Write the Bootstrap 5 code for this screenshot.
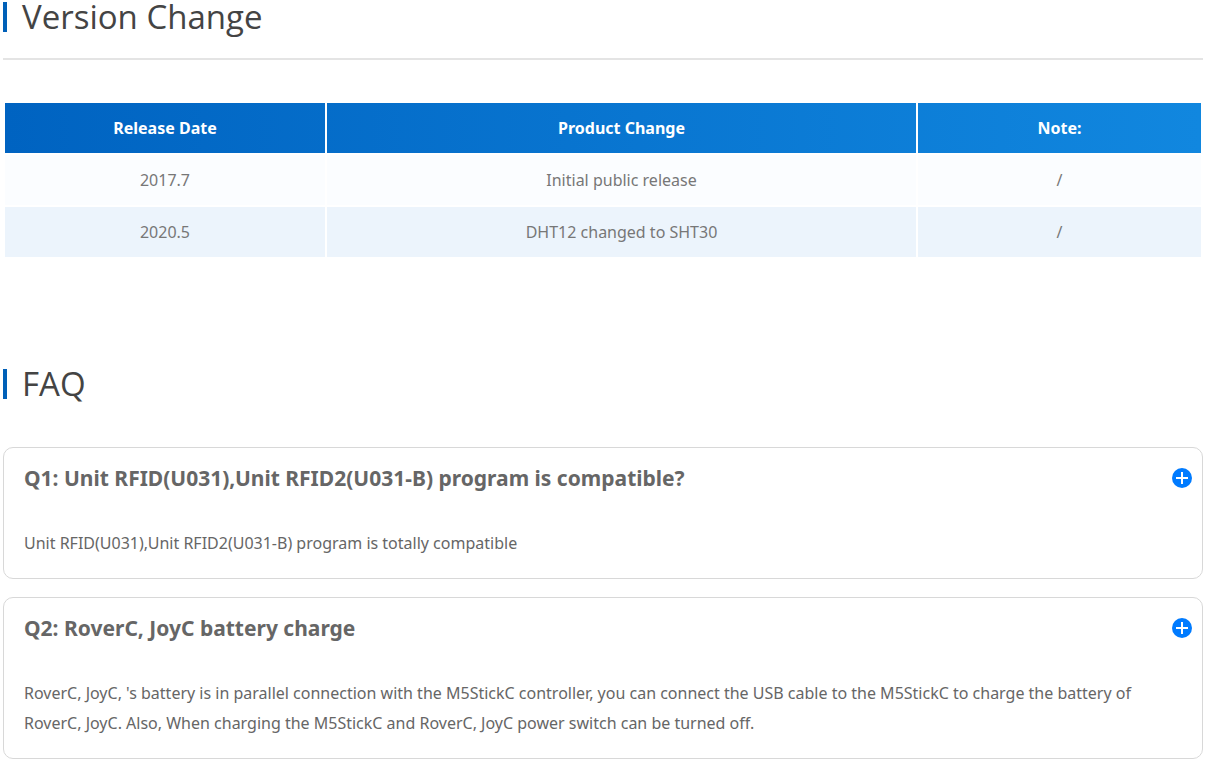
<!DOCTYPE html>
<html lang="en">
<head>
<meta charset="utf-8">
<meta name="viewport" content="width=device-width, initial-scale=1">
<title>Version Change and FAQ</title>
<link href="https://cdn.jsdelivr.net/npm/bootstrap@5.3.0/dist/css/bootstrap.min.css" rel="stylesheet">
<style>
body{font-family:"Noto Sans","Open Sans",sans-serif;color:#666;background:#fff;font-size:16px;line-height:30px}
.page-body{padding:2px 2px 2px 3px}
.section-title{font-family:"Open Sans","Noto Sans",sans-serif;font-size:33px;line-height:30px;font-weight:400;color:#444;border-left:4px solid #0060b8;padding-left:15px}
.title-rule{margin:26px 0 0;border-top:2px solid #e4e4e4;opacity:1}
.version-table{border-collapse:separate;border-spacing:2px;line-height:24px;margin-top:41px;table-layout:fixed}
.version-table thead{background:linear-gradient(90deg,#0063c1,#1187df)}
.version-table th{color:#fff;height:50px;padding:0}
.version-table td{height:50px;padding:0;color:#777;background:#fbfdff}
.version-table tbody tr:nth-child(2) td{background:#ecf4fc}
.col-date{width:320px}
.col-note{width:283px}
.faq-section{margin-top:110px}
.faq-list{margin-top:48px;gap:18px}
.faq-item{border:1px solid #d8d8d8;border-radius:10px;padding:15px 10px 20px 20px}
.faq-question{font-size:21px;line-height:30px;font-weight:700}
.faq-answer{margin:35px 10px 0 0}
.plus-btn{width:20px;height:20px}
.plus-btn svg{display:block}
</style>
</head>
<body>
<main class="page-body">
  <section>
    <h1 class="section-title mb-0">Version Change</h1>
    <hr class="title-rule">
    <table class="version-table w-100 text-center align-middle">
      <colgroup><col class="col-date"><col><col class="col-note"></colgroup>
      <thead>
        <tr><th scope="col">Release Date</th><th scope="col">Product Change</th><th scope="col">Note:</th></tr>
      </thead>
      <tbody>
        <tr><td>2017.7</td><td>Initial public release</td><td>/</td></tr>
        <tr><td>2020.5</td><td>DHT12 changed to SHT30</td><td>/</td></tr>
      </tbody>
    </table>
  </section>

  <section class="faq-section">
    <h1 class="section-title mb-0">FAQ</h1>
    <div class="faq-list d-flex flex-column">
      <article class="faq-item">
        <div class="d-flex justify-content-between align-items-center">
          <h2 class="faq-question mb-0">Q1: Unit RFID(U031),Unit RFID2(U031-B) program is compatible?</h2>
          <button type="button" class="plus-btn btn p-0 border-0 flex-shrink-0" aria-label="Toggle answer 1">
            <svg width="20" height="20" viewBox="0 0 20 20" aria-hidden="true"><circle cx="10" cy="10" r="10" fill="#007bff"/><path d="M10 4v12M4 10h12" stroke="#fff" stroke-width="2"/></svg>
          </button>
        </div>
        <p class="faq-answer">Unit RFID(U031),Unit RFID2(U031-B) program is totally compatible</p>
      </article>
      <article class="faq-item">
        <div class="d-flex justify-content-between align-items-center">
          <h2 class="faq-question mb-0">Q2: RoverC, JoyC battery charge</h2>
          <button type="button" class="plus-btn btn p-0 border-0 flex-shrink-0" aria-label="Toggle answer 2">
            <svg width="20" height="20" viewBox="0 0 20 20" aria-hidden="true"><circle cx="10" cy="10" r="10" fill="#007bff"/><path d="M10 4v12M4 10h12" stroke="#fff" stroke-width="2"/></svg>
          </button>
        </div>
        <p class="faq-answer">RoverC, JoyC, 's battery is in parallel connection with the M5StickC controller, you can connect the USB cable to the M5StickC to charge the battery of RoverC, JoyC. Also, When charging the M5StickC and RoverC, JoyC power switch can be turned off.</p>
      </article>
    </div>
  </section>
</main>
<script src="https://cdn.jsdelivr.net/npm/bootstrap@5.3.0/dist/js/bootstrap.bundle.min.js"></script>
</body>
</html>
